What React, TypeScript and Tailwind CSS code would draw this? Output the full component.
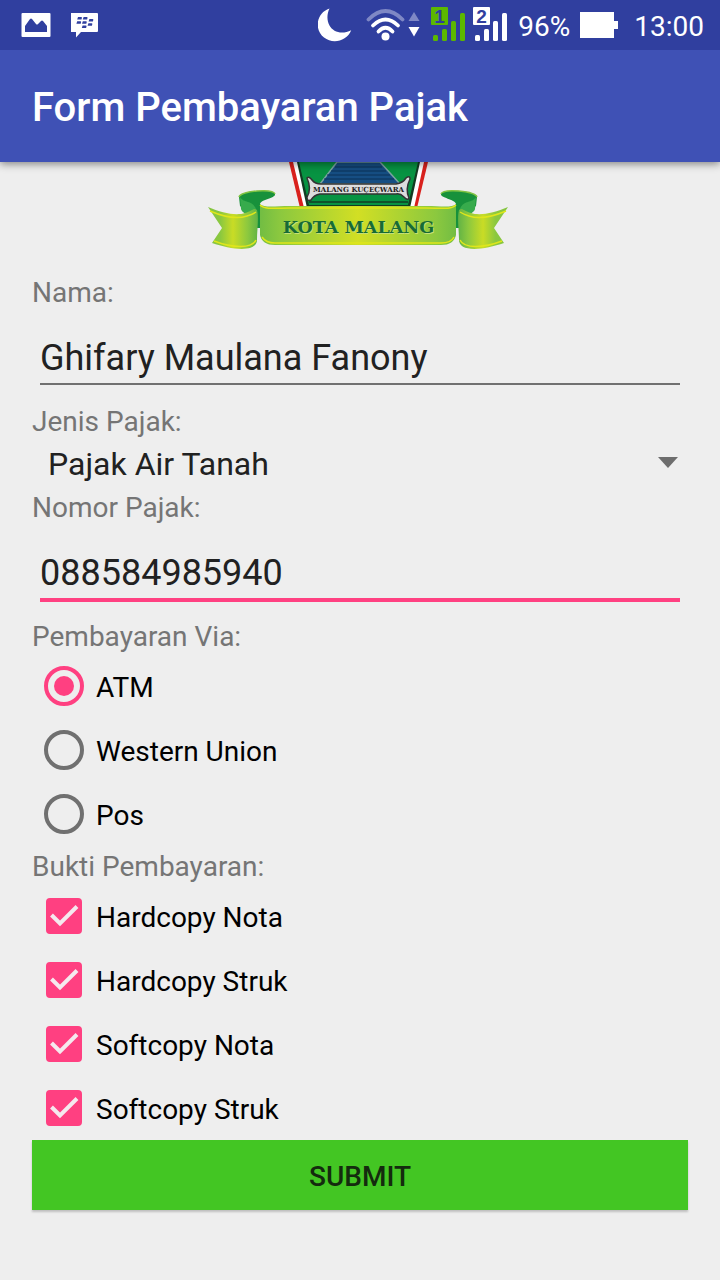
import { useState } from "react";

const payments = ["ATM", "Western Union", "Pos"];
const receipts = ["Hardcopy Nota", "Hardcopy Struk", "Softcopy Nota", "Softcopy Struk"];

function Signal({ slot, color, ink }: { slot: string; color: string; ink: string }) {
  return (
    <svg width="35" height="36" viewBox="0 0 35 36" aria-hidden="true">
      <rect x="0" y="0" width="17" height="18" rx="1" fill={color} />
      <text x="8.5" y="15.5" textAnchor="middle" fontFamily="Liberation Sans, sans-serif" fontWeight="700" fontSize="19" fill={ink}>
        {slot}
      </text>
      <rect x="2" y="28" width="5" height="6" rx="1.5" fill={color} />
      <rect x="11" y="22" width="5" height="12" rx="1.5" fill={color} />
      <rect x="20" y="14" width="5" height="20" rx="1.5" fill={color} />
      <rect x="29" y="6" width="5" height="28" rx="1.5" fill={color} />
    </svg>
  );
}

function StatusBar() {
  return (
    <div className="relative z-10 flex h-[50px] items-center bg-[#303f9f] pr-4 pl-[21px] text-white">
      <svg width="30" height="26" viewBox="0 0 30 26" aria-hidden="true">
        <rect x="0.5" y="1" width="29" height="24" rx="1" fill="#fff" />
        <path d="M4 20V14L9 7Q10 6 11 7L15 12Q16 13 17 12L20 9Q21 8 22 9L26 14V20Z" fill="#303f9f" />
      </svg>
      <svg className="ml-5" width="28" height="26" viewBox="1 0 28 26" aria-hidden="true">
        <path d="M1 1H27Q28 1 28 2V19Q28 20 27 20H11L6 25.5V20H1Q0.500 20 0.500 19V2Q0.500 1 1 1Z" fill="#fff" />
        <g fill="#303f9f">
          <path d="M8 5H11.200Q12.200 5 11.900 6L11.500 7.500H7.200Z" />
          <path d="M13.600 5H16.800Q17.800 5 17.500 6L17.100 7.500H12.800Z" />
          <path d="M7.200 9.200H10.400Q11.400 9.200 11.100 10.200L10.700 11.700H6.400Z" />
          <path d="M12.800 9.200H16Q17 9.200 16.700 10.200L16.300 11.700H12Z" />
          <path d="M19.400 7H22.600Q23.600 7 23.300 8L22.900 9.500H18.600Z" />
          <path d="M18.400 11.200H21.600Q22.600 11.200 22.300 12.200L21.900 13.700H17.600Z" />
          <path d="M12.600 13.400H15.800Q16.800 13.400 16.500 14.400L16.100 15.900H11.800Z" />
        </g>
      </svg>
      <div className="ml-auto flex items-center">
        <svg width="34" height="34" viewBox="0 0 34 34" aria-hidden="true">
          <path d="M11.5 0.5C-2 5 -4 22 6 29.5C15 36.5 29 33 33.2 22.2C24 27 15 24 11.5 17.5C8.5 12 9 5.5 11.5 0.5Z" fill="#fff" />
        </svg>
        <svg className="ml-[14px]" width="54" height="34" viewBox="0 0 54 34" aria-hidden="true">
          <g fill="none" strokeLinecap="round" strokeWidth="3.8">
            <path d="M2.5 11.5Q19.500 -5.500 36.5 11.5" stroke="#7f88c5" />
            <path d="M7 17.5Q19.5 5.5 32 17.5" stroke="#fff" />
            <path d="M12.5 23.5Q19.5 16 26.5 23.5" stroke="#fff" />
          </g>
          <circle cx="19.5" cy="28.5" r="4" fill="#fff" />
          <path d="M42.5 13L48 4L53.5 13Z" fill="#7f88c5" />
          <path d="M42.5 19H53.5L48 28.5Z" fill="#fff" />
        </svg>
        <div className="ml-[11px] flex gap-[7px]">
          <Signal slot="1" color="#5cb800" ink="#303f9f" />
          <Signal slot="2" color="#ffffff" ink="#303f9f" />
        </div>
        <span className="ml-[10px] pt-1 text-[28px] leading-8">96%</span>
        <svg className="ml-[10px]" width="38" height="26" viewBox="0 0 38 26" aria-hidden="true">
          <path d="M0 0H34V9H38V17H34V26H0Z" fill="#fff" />
        </svg>
        <span className="ml-4 pt-1 text-[28px] leading-8">13:00</span>
      </div>
    </div>
  );
}

function RibbonTail() {
  return (
    <>
      <path d="M239 197C239 191 273 188 275 194C276 198 261 199 260 204V228H256V218L240 206Z" fill="#17913b" />
      <path d="M240 197C244 204 252 199 256 209L257 226C250 216 241 212 241 209Z" fill="#37ab4c" />
      <path d="M239 197C241 191 273 188 275 194" fill="none" stroke="#7fc241" strokeWidth="1.5" />
      <path d="M208 207C222 213 236 216 245 213C252 211 254 207 257 210C259 217 257 231 257 239C258 253 232 250 212 243L222 228Z" fill="url(#tail)" />
      <path d="M210 211C224 217 238 219 247 216Q253 214 256 212M214 241C232 248 252 249 256 240" fill="none" stroke="#dfe61b" strokeWidth="1.5" />
    </>
  );
}

function CityEmblem() {
  return (
    <svg className="mx-auto block" width="320" height="110" viewBox="200 162 320 110" role="img" aria-label="Kota Malang">
      <defs>
        <linearGradient id="tail" x1="0" x2="1">
          <stop offset="0" stopColor="#83c441" />
          <stop offset="0.25" stopColor="#8bc83f" />
          <stop offset="0.5" stopColor="#c9dc25" />
          <stop offset="0.8" stopColor="#8bc83f" />
          <stop offset="1" stopColor="#62b345" />
        </linearGradient>
        <linearGradient id="band" x1="0" x2="1">
          <stop offset="0" stopColor="#72bd43" />
          <stop offset="0.1" stopColor="#8bc83f" />
          <stop offset="0.5" stopColor="#d2df24" />
          <stop offset="0.9" stopColor="#8bc83f" />
          <stop offset="1" stopColor="#72bd43" />
        </linearGradient>
      </defs>
      <path d="M289 162H428L417 208H300Z" fill="#d9211d" />
      <path d="M293 162H424L414 208H304Z" fill="#fff" />
      <path d="M297 162H420L410 208H307Z" fill="#123b22" />
      <path d="M299 162H418L408 205H309Z" fill="#079342" />
      <path d="M337 162H380L400 184H320Z" fill="#164e83" stroke="#7aa3a0" strokeWidth="1.5" />
      <path d="M335 167H382M331 171H386M327 175H390M324 179H394" stroke="#0b3157" strokeWidth="1" />
      <path d="M307 178Q309 176 312 180Q315 184 321 184H396Q403 183 406 178Q410 175 410 179Q405 189 409 198Q408 201 404 197Q400 193 396 194H320Q314 195 311 200Q307 202 307 197Q312 189 307 178Z" fill="#ddd" stroke="#333" strokeWidth="1.5" />
      <text x="358.5" y="192" textAnchor="middle" fontFamily="DejaVu Serif, serif" fontSize="7" fontWeight="700" fill="#222">MALANG KUÇEÇWARA</text>
      <path d="M309 202H408" stroke="#143d24" strokeWidth="1.5" />
      <RibbonTail />
      <g transform="matrix(-1 0 0 1 716 0)">
        <RibbonTail />
      </g>
      <path d="M260 204C264 208 275 206 290 206H426C441 206 452 208 456 204V235Q454 245 441 245H275Q262 245 260 235Z" fill="url(#band)" />
      <path d="M260 205C265 210 277 208 290 208H426C440 208 451 210 456 205M262 237Q266 243 275 243H441Q451 243 454 237" fill="none" stroke="#dfe61b" strokeWidth="1.5" />
      <text x="359.5" y="234" textAnchor="middle" fontFamily="DejaVu Serif, serif" fontSize="17.5" fontWeight="700" fill="#c6de79">KOTA MALANG</text>
      <text x="358.5" y="233" textAnchor="middle" fontFamily="DejaVu Serif, serif" fontSize="17.5" fontWeight="700" fill="#176b35">KOTA MALANG</text>
    </svg>
  );
}

const caption = "block pt-1 text-[28px] leading-[34px] text-[#757575]";
const field = "block w-full bg-transparent pt-6 text-[36px] leading-[49px] text-[#212121] outline-none";

export default function App() {
  const [name, setName] = useState("Ghifary Maulana Fanony");
  const [number, setNumber] = useState("088584985940");

  return (
    <div className="flex min-h-screen flex-col bg-[#eeeeee] font-[Roboto,sans-serif]">
      <StatusBar />
      <header className="relative flex h-28 items-center bg-[#3f51b5] px-8 pt-1 shadow-[0_2px_8px_rgba(0,0,0,0.45)]">
        <h1 className="text-[40px] leading-[56px] font-medium text-white">Form Pembayaran Pajak</h1>
      </header>

      <form className="px-8 pb-16" onSubmit={(e) => e.preventDefault()}>
        <CityEmblem />

        <label htmlFor="nama" className={caption}>Nama:</label>
        <div className="px-2 pb-4">
          <div className="border-b-2 border-[#707070]">
            <input id="nama" className={field} value={name} onChange={(e) => setName(e.target.value)} />
          </div>
        </div>

        <label htmlFor="jenis" className={caption}>Jenis Pajak:</label>
        <div className="relative">
          <select id="jenis" className="block h-12 w-full appearance-none bg-transparent px-4 pt-[2px] text-[32px] leading-[46px] text-[#212121] outline-none">
            <option>Pajak Air Tanah</option>
          </select>
          <svg className="pointer-events-none absolute top-[18px] right-[10px]" width="20" height="11" viewBox="0 0 20 11" aria-hidden="true">
            <path d="M0 0H20L10 11Z" fill="#6d6d6d" />
          </svg>
        </div>

        <label htmlFor="nomor" className={caption}>Nomor Pajak:</label>
        <div className="px-2 pb-[14px]">
          <div className="border-b-4 border-[#ff4081]">
            <input id="nomor" inputMode="numeric" className={field} value={number} onChange={(e) => setNumber(e.target.value)} />
          </div>
        </div>

        <fieldset>
          <legend className={caption}>Pembayaran Via:</legend>
          {payments.map((item, i) => (
            <label key={item} className="flex h-16 items-center gap-3 pl-3 text-[28px] leading-8 text-black">
              <input
                type="radio"
                name="via"
                defaultChecked={i === 0}
                className="size-10 shrink-0 appearance-none rounded-full border-4 border-[#707070] bg-clip-content p-[6px] checked:border-[#ff4081] checked:bg-[#ff4081]"
              />
              <span className="pt-1">{item}</span>
            </label>
          ))}
        </fieldset>

        <fieldset>
          <legend className={caption}>Bukti Pembayaran:</legend>
          {receipts.map((item) => (
            <label key={item} className="flex h-16 items-center gap-[14px] pl-[14px] text-[28px] leading-8 text-black">
              <span className="grid shrink-0">
                <input
                  type="checkbox"
                  defaultChecked
                  className="peer col-start-1 row-start-1 size-9 appearance-none rounded border-4 border-[#707070] checked:border-[#ff4081] checked:bg-[#ff4081]"
                />
                <svg className="pointer-events-none invisible col-start-1 row-start-1 peer-checked:visible" width="36" height="36" viewBox="0 0 36 36" aria-hidden="true">
                  <path d="M5.5 17L14 25.5L31 8.5" fill="none" stroke="#f5e9ee" strokeWidth="4" />
                </svg>
              </span>
              <span className="pt-1">{item}</span>
            </label>
          ))}
        </fieldset>

        <button type="submit" className="block h-[70px] w-full bg-[#43c623] pt-1 text-[28px] leading-8 font-medium text-[#142b0e] shadow-[0_2px_2px_rgba(0,0,0,0.2)]">
          SUBMIT
        </button>
      </form>
    </div>
  );
}
